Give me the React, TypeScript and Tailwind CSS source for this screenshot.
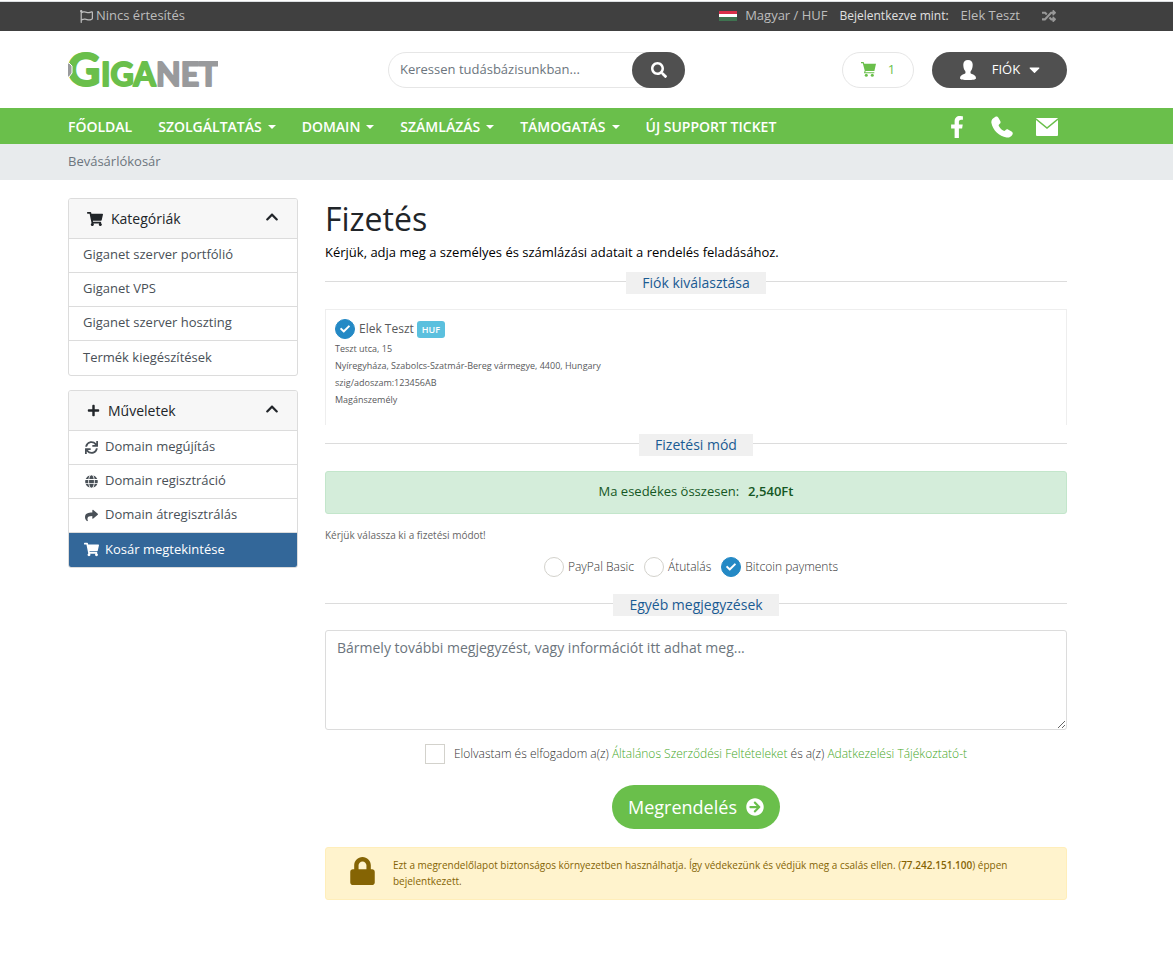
import type { ReactNode } from 'react'
import {
  FaArrowCircleRight,
  FaCaretDown,
  FaCheck,
  FaChevronUp,
  FaFacebookF,
  FaGlobe,
  FaLock,
  FaPlus,
  FaRandom,
  FaRegFlag,
  FaSearch,
  FaShare,
  FaShoppingCart,
  FaSync,
} from 'react-icons/fa'

interface MenuItem {
  label: string
  icon?: ReactNode
  active?: boolean
}

const navItems = [
  { label: 'FŐOLDAL', dropdown: false },
  { label: 'SZOLGÁLTATÁS', dropdown: true },
  { label: 'DOMAIN', dropdown: true },
  { label: 'SZÁMLÁZÁS', dropdown: true },
  { label: 'TÁMOGATÁS', dropdown: true },
  { label: 'ÚJ SUPPORT TICKET', dropdown: false },
]

const categories: MenuItem[] = [
  { label: 'Giganet szerver portfólió' },
  { label: 'Giganet VPS' },
  { label: 'Giganet szerver hoszting' },
  { label: 'Termék kiegészítések' },
]

const actions: MenuItem[] = [
  { label: 'Domain megújítás', icon: <FaSync className="size-[13px]" /> },
  { label: 'Domain regisztráció', icon: <FaGlobe className="size-[13px]" /> },
  { label: 'Domain átregisztrálás', icon: <FaShare className="size-[13px]" /> },
  { label: 'Kosár megtekintése', icon: <FaShoppingCart className="size-[15px]" />, active: true },
]

const payments = ['PayPal Basic', 'Átutalás', 'Bitcoin payments']

const addressLines = [
  'Teszt utca, 15',
  'Nyíregyháza, Szabolcs-Szatmár-Bereg vármegye, 4400, Hungary',
  'szig/adoszam:123456AB',
  'Magánszemély',
]

function Logo() {
  return (
    <svg viewBox="0 -12 150 60" className="h-[60px] w-[150px]" role="img" aria-label="Giganet">
      <g fontFamily="Lato, sans-serif" fontWeight="700" strokeWidth="2" strokeLinejoin="round">
        <text x="-1" y="34" fontSize="46" fill="#6abf4b" stroke="#6abf4b">G</text>
        <text x="33" y="34" fontSize="32" fill="#6abf4b" stroke="#6abf4b">IGA</text>
        <text x="88" y="34" fontSize="32" fill="#999a9c" stroke="#999a9c">NET</text>
      </g>
      <path d="M-1 11h2l3 3v7l-3 4h-2z" fill="#999a9c" stroke="#fff" strokeWidth="1" />
    </svg>
  )
}

function Flag() {
  return (
    <svg viewBox="0 0 18 10" className="h-[10px] w-[18px]" aria-hidden="true">
      <rect width="18" height="4" fill="#d8304a" />
      <rect y="3" width="18" height="4" fill="#fff" />
      <rect y="6" width="18" height="4" fill="#3f7350" />
    </svg>
  )
}

function CartIcon() {
  return (
    <svg viewBox="0 0 15 15" className="size-[15px]" fill="currentColor" aria-hidden="true">
      <path d="M0 0h2.600l.7 1.800H15L13.400 9H4.600L4.300 10.200h9v1H2.900l.8-2.600L1.800 1.200H0z" />
      <circle cx="5.300" cy="13.300" r="1.500" />
      <circle cx="11.300" cy="13.300" r="1.500" />
    </svg>
  )
}

function UserIcon() {
  return (
    <svg viewBox="0 0 16 20" className="h-5 w-4" fill="currentColor" aria-hidden="true">
      <path d="M8 0c3 0 4.700 2 4.700 4.500 0 2-.3 4.300-1.300 5.700-.7 1-.9 1.200-.9 2.200 0 .8.300 1.100 1.500 1.600 2.600 1 4 2 4 4.200 0 1.300-3.500 1.800-8 1.800s-8-.5-8-1.800c0-2.200 1.400-3.200 4-4.200 1.200-.5 1.500-.8 1.500-1.600 0-1-.2-1.200-.9-2.200-1-1.400-1.300-3.700-1.300-5.700C3.300 2 5 0 8 0z" />
    </svg>
  )
}

function PhoneIcon() {
  return (
    <svg viewBox="0 0 24 24" className="size-[22px]" fill="currentColor" aria-hidden="true">
      <path d="M4.500 1c1.700-.8 2.900-.4 3.900 1.400l1.700 3c.7 1.400.4 2.400-.8 3.300-1 .8-1.200 1.300-.6 2.400 1.200 2 2.600 3.500 4.600 4.800 1.100.7 1.600.5 2.400-.4 1-1.200 2-1.400 3.300-.6l3 1.800c1.700 1 2.200 2.200 1.300 3.700-1.400 2.300-3.500 3.400-6.300 3C9 22.200 1.900 15.500.400 7.300 0 4.500 1.900 2.200 4.500 1z" />
    </svg>
  )
}

function MailIcon() {
  return (
    <svg viewBox="0 0 22 18" className="h-[18px] w-[22px]" aria-hidden="true">
      <rect width="22" height="18" rx="1" fill="currentColor" />
      <path d="M0 1l11 9 11-9" fill="none" stroke="#6abf4b" strokeWidth="1.500" />
    </svg>
  )
}

function Panel({ title, icon, items }: { title: string; icon: ReactNode; items: MenuItem[] }) {
  return (
    <section className="overflow-hidden rounded-[3px] border border-[#dcdcdc]">
      <button type="button" className="flex h-10 w-full items-center border-b border-[#dcdcdc] bg-[#f7f7f7] px-[18px] text-sm text-[#212529]">
        {icon}
        <span className="ml-2">{title}</span>
        <FaChevronUp className="mb-1 ml-auto size-[14px]" />
      </button>
      <ul className="divide-y divide-[#dcdcdc]">
        {items.map((item) => (
          <li key={item.label} className="h-[34px]">
            <a
              href="#"
              className={
                item.active
                  ? 'flex h-full items-center bg-[#336799] px-[14px] pb-px text-[13px] text-white'
                  : 'flex h-full items-center px-[14px] pb-px text-[13px] text-[#495057]'
              }
            >
              {item.icon && <span className="mr-[6px] flex w-4 justify-center">{item.icon}</span>}
              {item.label}
            </a>
          </li>
        ))}
      </ul>
    </section>
  )
}

function SubHeading({ children }: { children: ReactNode }) {
  return (
    <h2 className="flex items-center text-sm leading-[22px] text-[#1a5b93] before:mb-1 before:h-px before:flex-1 before:bg-[#dcdcdc] after:mb-1 after:h-px after:flex-1 after:bg-[#dcdcdc]">
      <span className="bg-[#f0f0f0] px-4">{children}</span>
    </h2>
  )
}

function CircleRadio({ name, id, defaultChecked }: { name: string; id: string; defaultChecked?: boolean }) {
  return (
    <span className="grid size-5 shrink-0 place-items-center">
      <input
        type="radio"
        name={name}
        id={id}
        defaultChecked={defaultChecked}
        className="peer col-start-1 row-start-1 size-5 appearance-none rounded-full border border-[#d3d2cc] bg-white checked:border-[#2489c5] checked:bg-[#2489c5]"
      />
      <FaCheck className="pointer-events-none invisible col-start-1 row-start-1 size-[10px] text-white peer-checked:visible" />
    </span>
  )
}

export default function App() {
  return (
    <div className="min-h-screen bg-white font-['Open_Sans',sans-serif] text-[13px] text-[#212529]">
      <div className="mt-px border-t border-[#dcdfe2] bg-[#404040]">
        <div className="flex h-[29px] items-center pr-[117px] pb-px pl-20 text-[13px] text-[#bdbdbd]">
          <a href="#" className="flex items-center gap-[3px]">
            <FaRegFlag className="size-[13px]" />
            Nincs értesítés
          </a>
          <a href="#" className="ml-auto flex items-center gap-2">
            <Flag />
            Magyar / HUF
          </a>
          <span className="ml-3 text-xs text-[#e0e0e0]">Bejelentkezve mint:</span>
          <a href="#" className="ml-3">Elek Teszt</a>
          <button type="button" aria-label="Váltás" className="ml-[22px]">
            <FaRandom className="size-[14px] text-[#999]" />
          </button>
        </div>
      </div>

      <header className="flex h-[77px] items-center pr-[106px] pl-[68px]">
        <a href="#"><Logo /></a>
        <form className="ml-[170px] flex h-9 w-[297px] rounded-full border border-[#e6e6e6]">
          <input
            type="text"
            aria-label="Keresés"
            placeholder="Keressen tudásbázisunkban..."
            className="min-w-0 flex-1 rounded-l-full pl-[11px] text-[13px] outline-none placeholder:text-[#6c757d]"
          />
          <button type="button" aria-label="Keresés indítása" className="-m-px flex w-[53px] items-center justify-center rounded-full bg-[#505050] text-white">
            <FaSearch className="size-4" />
          </button>
        </form>
        <a href="#" className="ml-auto flex h-9 w-[72px] items-center justify-center gap-3 rounded-full border border-[#e6e6e6] text-[#6abf4b]">
          <CartIcon />
          1
        </a>
        <button type="button" className="ml-[18px] flex h-9 w-[135px] items-center justify-center rounded-full bg-[#505050] pl-1 text-[13px] text-white">
          <UserIcon />
          <span className="ml-4">FIÓK</span>
          <FaCaretDown className="ml-[6px] size-[17px]" />
        </button>
      </header>

      <nav className="flex h-9 items-center bg-[#6abf4b] pt-[2px] pr-[115px] pl-[68px] text-white">
        <ul className="flex items-center gap-[26px] text-sm font-semibold">
          {navItems.map((item) => (
            <li key={item.label}>
              <a href="#" className="flex items-center gap-[6px] whitespace-nowrap">
                {item.label}
                {item.dropdown && <span className="mb-px border-x-4 border-t-4 border-x-transparent border-t-white" />}
              </a>
            </li>
          ))}
        </ul>
        <div className="ml-auto flex items-center gap-[23px]">
          <a href="#" aria-label="Facebook"><FaFacebookF className="size-[22px]" /></a>
          <a href="#" aria-label="Telefon"><PhoneIcon /></a>
          <a href="#" aria-label="E-mail"><MailIcon /></a>
        </div>
      </nav>

      <div className="flex h-9 items-center bg-[#e8ebed] pl-[68px] text-[#6c757d]">Bevásárlókosár</div>

      <div className="grid grid-cols-[230px_1fr] items-start gap-[27px] pt-[18px] pr-[106px] pl-[68px]">
        <aside className="flex flex-col gap-[14px]">
          <Panel title="Kategóriák" icon={<FaShoppingCart className="size-4" />} items={categories} />
          <Panel title="Műveletek" icon={<FaPlus className="size-[13px]" />} items={actions} />
        </aside>

        <main>
          <h1 className="text-[32px] leading-[42px]">Fizetés</h1>
          <p className="mt-[2px] mb-[10px] leading-5 text-black">
            Kérjük, adja meg a személyes és számlázási adatait a rendelés feladásához.
          </p>

          <SubHeading>Fiók kiválasztása</SubHeading>
          <div className="mt-[15px] mb-[9px] h-[116px] border border-b-0 border-[#eee] px-[9px] pt-[9px] text-[#58595b]">
            <div className="flex items-center">
              <CircleRadio name="account" id="account-1" defaultChecked />
              <label htmlFor="account-1" className="ml-1 text-xs">Elek Teszt</label>
              <span className="ml-[3px] rounded-[3px] bg-[#5bc0de] px-[5px] text-[9px] leading-[17px] font-semibold text-white">HUF</span>
            </div>
            <address className="mt-px text-[9px] leading-[17px] not-italic">
              {addressLines.map((line) => (
                <div key={line}>{line}</div>
              ))}
            </address>
          </div>

          <SubHeading>Fizetési mód</SubHeading>
          <div className="mt-[15px] flex h-[43px] items-center justify-center gap-[9px] rounded-[3px] border border-[#c3e6cb] bg-[#d4edda] pb-[2px] text-[#155724]">
            Ma esedékes összesen:
            <strong className="font-semibold">2,540Ft</strong>
          </div>
          <p className="mt-[13px] text-[10px] leading-4 text-[#666]">Kérjük válassza ki a fizetési módot!</p>
          <div className="mt-[14px] mb-[17px] flex justify-center gap-[10px] pr-[10px] text-xs font-light text-[#333]">
            {payments.map((payment, index) => (
              <div key={payment} className="flex items-center gap-1">
                <CircleRadio name="payment" id={`payment-${index}`} defaultChecked={index === 2} />
                <label htmlFor={`payment-${index}`}>{payment}</label>
              </div>
            ))}
          </div>

          <SubHeading>Egyéb megjegyzések</SubHeading>
          <textarea
            aria-label="Egyéb megjegyzések"
            placeholder="Bármely további megjegyzést, vagy információt itt adhat meg..."
            className="mt-[14px] block h-[100px] w-full rounded-[3px] border border-[#dcdcdc] px-[11px] py-[7px] text-sm placeholder:text-[#6c757d]"
          />
          <div className="mt-[14px] flex items-center justify-center gap-[9px] text-xs font-light text-[#333]">
            <input type="checkbox" id="terms" className="size-5 appearance-none border border-[#d3d2cc] bg-white checked:bg-[#2489c5]" />
            <label htmlFor="terms">
              Elolvastam és elfogadom a(z) <a href="#" className="text-[#46a81f]">Általános Szerződési Feltételeket</a> és a(z){' '}
              <a href="#" className="text-[#46a81f]">Adatkezelési Tájékoztató-t</a>
            </label>
          </div>
          <button type="button" className="mx-auto mt-[21px] flex h-11 items-center gap-[9px] rounded-full bg-[#6abf4b] px-4 text-lg text-white">
            Megrendelés
            <FaArrowCircleRight className="size-[18px]" />
          </button>
          <div className="mt-[18px] flex h-[53px] items-center rounded-[3px] border border-[#ffeeba] bg-[#fff3cd] pr-10 pb-px pl-6 text-[10px] leading-4 text-[#856404]">
            <FaLock className="mb-1 h-7 w-[25px] shrink-0" />
            <p className="ml-[18px]">
              Ezt a megrendelőlapot biztonságos környezetben használhatja. Így védekezünk és védjük meg a csalás ellen. (
              <strong className="font-semibold">77.242.151.100</strong>) éppen bejelentkezett.
            </p>
          </div>
        </main>
      </div>
    </div>
  )
}
